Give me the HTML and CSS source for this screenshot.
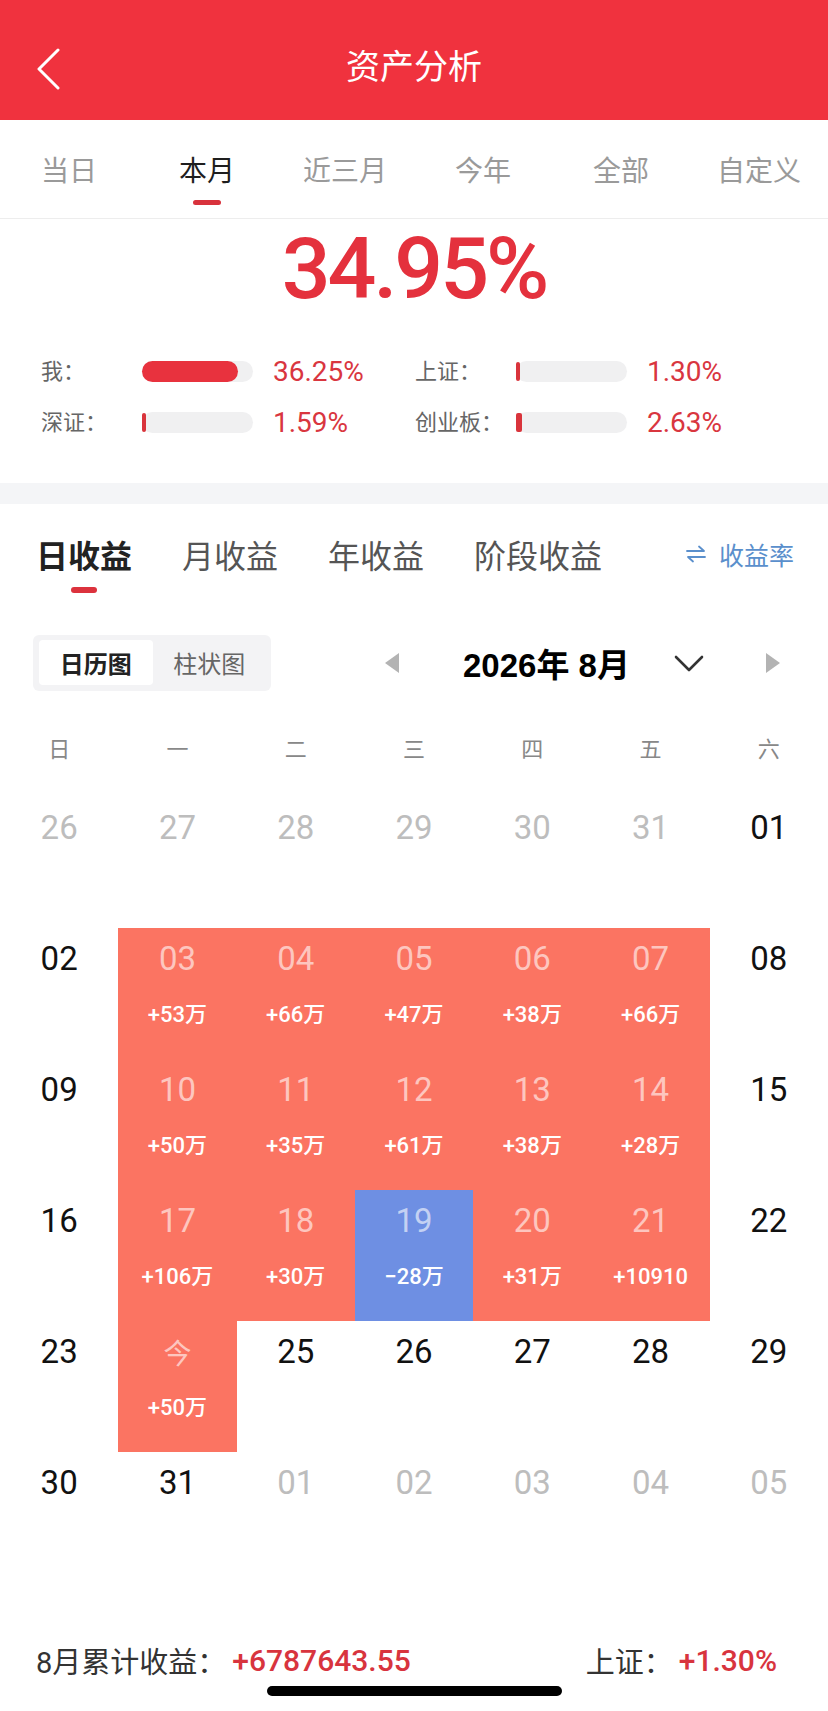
FILE: index.html
```html
<!DOCTYPE html>
<html lang="zh-CN">
<head>
<meta charset="utf-8">
<title>资产分析</title>
<link rel="stylesheet" href="styles.css">
</head>
<body>
<div class="page">
  <header class="topbar">
    <div class="back">
      <svg width="26" height="42" viewBox="0 0 26 42"><polyline points="22,2 3,21 22,40" fill="none" stroke="#fff" stroke-width="3" stroke-linecap="round" stroke-linejoin="round"/></svg>
    </div>
    <h1 class="title">资产分析</h1>
    <div></div>
  </header>

  <nav class="period-tabs">
    <div class="ptab"><span>当日</span><span class="pmark"></span></div>
    <div class="ptab active"><span>本月</span><span class="pmark"></span></div>
    <div class="ptab"><span>近三月</span><span class="pmark"></span></div>
    <div class="ptab"><span>今年</span><span class="pmark"></span></div>
    <div class="ptab"><span>全部</span><span class="pmark"></span></div>
    <div class="ptab"><span>自定义</span><span class="pmark"></span></div>
  </nav>

  <section class="summary">
    <div class="total">34.95%</div>
    <div class="compare">
      <div class="cmp"><span class="cmp-label">我：</span><span class="track"><span class="fill" style="width:96px"></span></span><span class="cmp-val">36.25%</span></div>
      <div class="cmp"><span class="cmp-label">上证：</span><span class="track"><span class="fill thin" style="width:4px"></span></span><span class="cmp-val">1.30%</span></div>
      <div class="cmp"><span class="cmp-label">深证：</span><span class="track"><span class="fill thin" style="width:4px"></span></span><span class="cmp-val">1.59%</span></div>
      <div class="cmp"><span class="cmp-label">创业板：</span><span class="track"><span class="fill thin" style="width:6px"></span></span><span class="cmp-val">2.63%</span></div>
    </div>
  </section>

  <div class="band"></div>

  <section class="income">
    <div class="itabs">
      <div class="itab active"><span>日收益</span><span class="imark"></span></div>
      <div class="itab"><span>月收益</span></div>
      <div class="itab"><span>年收益</span></div>
      <div class="itab"><span>阶段收益</span></div>
      <div class="rate">
        <svg width="22" height="20" viewBox="0 0 22 20"><path d="M2 7 H19 L14 2.5" fill="none" stroke="#5a8fcc" stroke-width="1.8" stroke-linecap="round" stroke-linejoin="round"/><path d="M20 13 H3 L8 17.5" fill="none" stroke="#5a8fcc" stroke-width="1.8" stroke-linecap="round" stroke-linejoin="round"/></svg>
        <span>收益率</span>
      </div>
    </div>

    <div class="toolbar">
      <div class="seg">
        <span class="seg-item on">日历图</span>
        <span class="seg-item">柱状图</span>
      </div>
      <div class="monthnav">
        <svg class="tri-l" width="14" height="20" viewBox="0 0 14 20"><polygon points="14,0 0,10 14,20" fill="#b3b3b3"/></svg>
        <span class="month">2026年 8月</span>
        <svg class="chev" width="30" height="17" viewBox="0 0 30 17"><polyline points="2,2 15,15 28,2" fill="none" stroke="#333" stroke-width="2.6" stroke-linecap="round" stroke-linejoin="round"/></svg>
        <svg class="tri-r" width="14" height="20" viewBox="0 0 14 20"><polygon points="0,0 14,10 0,20" fill="#b3b3b3"/></svg>
      </div>
    </div>

    <div class="weekdays">
      <span>日</span><span>一</span><span>二</span><span>三</span><span>四</span><span>五</span><span>六</span>
    </div>

    <div class="calendar">
      <div class="day muted"><span class="num">26</span></div>
      <div class="day muted"><span class="num">27</span></div>
      <div class="day muted"><span class="num">28</span></div>
      <div class="day muted"><span class="num">29</span></div>
      <div class="day muted"><span class="num">30</span></div>
      <div class="day muted"><span class="num">31</span></div>
      <div class="day"><span class="num">01</span></div>

      <div class="day"><span class="num">02</span></div>
      <div class="day up"><span class="num">03</span><span class="amt">+53万</span></div>
      <div class="day up"><span class="num">04</span><span class="amt">+66万</span></div>
      <div class="day up"><span class="num">05</span><span class="amt">+47万</span></div>
      <div class="day up"><span class="num">06</span><span class="amt">+38万</span></div>
      <div class="day up"><span class="num">07</span><span class="amt">+66万</span></div>
      <div class="day"><span class="num">08</span></div>

      <div class="day"><span class="num">09</span></div>
      <div class="day up"><span class="num">10</span><span class="amt">+50万</span></div>
      <div class="day up"><span class="num">11</span><span class="amt">+35万</span></div>
      <div class="day up"><span class="num">12</span><span class="amt">+61万</span></div>
      <div class="day up"><span class="num">13</span><span class="amt">+38万</span></div>
      <div class="day up"><span class="num">14</span><span class="amt">+28万</span></div>
      <div class="day"><span class="num">15</span></div>

      <div class="day"><span class="num">16</span></div>
      <div class="day up"><span class="num">17</span><span class="amt">+106万</span></div>
      <div class="day up"><span class="num">18</span><span class="amt">+30万</span></div>
      <div class="day down"><span class="num">19</span><span class="amt">−28万</span></div>
      <div class="day up"><span class="num">20</span><span class="amt">+31万</span></div>
      <div class="day up"><span class="num">21</span><span class="amt">+10910</span></div>
      <div class="day"><span class="num">22</span></div>

      <div class="day"><span class="num">23</span></div>
      <div class="day up"><span class="num cjk">今</span><span class="amt">+50万</span></div>
      <div class="day"><span class="num">25</span></div>
      <div class="day"><span class="num">26</span></div>
      <div class="day"><span class="num">27</span></div>
      <div class="day"><span class="num">28</span></div>
      <div class="day"><span class="num">29</span></div>

      <div class="day"><span class="num">30</span></div>
      <div class="day"><span class="num">31</span></div>
      <div class="day muted"><span class="num">01</span></div>
      <div class="day muted"><span class="num">02</span></div>
      <div class="day muted"><span class="num">03</span></div>
      <div class="day muted"><span class="num">04</span></div>
      <div class="day muted"><span class="num">05</span></div>
    </div>

    <div class="totals">
      <span class="tl-label">8月累计收益：</span>
      <span class="tl-val">+6787643.55</span>
      <span class="tl-label push">上证：</span>
      <span class="tl-val">+1.30%</span>
    </div>
  </section>

  <div class="home"></div>
</div>
</body>
</html>
```

FILE: styles.css
```css
html, body {
  margin: 0;
  padding: 0;
  background: #fff;
}

body {
  font-family: Roboto, "Noto Sans CJK SC", sans-serif;
  height: 1711px;
  overflow: hidden;
}

.page {
  width: 828px;
}

/* ---------- top bar ---------- */
.topbar {
  height: 120px;
  box-sizing: border-box;
  padding-top: 10px;
  background: #f0323e;
  display: grid;
  grid-template-columns: 120px 1fr 120px;
  align-items: center;
}

.back {
  padding-left: 36px;
  padding-top: 8px;
  display: flex;
}

.title {
  margin: 0;
  text-align: center;
  color: #fff;
  font-family: "Noto Sans CJK SC", sans-serif;
  font-size: 34px;
  font-weight: 400;
  line-height: 40px;
}

/* ---------- period tabs ---------- */
.period-tabs {
  display: flex;
  height: 99px;
  box-sizing: border-box;
  border-bottom: 1px solid #ededed;
}

.ptab {
  flex: 1;
  display: flex;
  flex-direction: column;
  align-items: center;
  padding-top: 32px;
  font-family: "Noto Sans CJK SC", sans-serif;
  font-size: 28px;
  line-height: 34px;
  color: #9a9a9a;
}

.pmark {
  width: 28px;
  height: 5px;
  margin-top: 14px;
  border-radius: 3px;
  background: transparent;
}

.ptab.active {
  color: #1e1e1e;
}

.ptab.active .pmark {
  background: #d8323c;
}

/* ---------- summary ---------- */
.total {
  text-align: center;
  font-size: 86px;
  line-height: 100px;
  font-weight: 500;
  letter-spacing: -3px;
  color: #e4313d;
}

.compare {
  display: grid;
  grid-template-columns: 374px 1fr;
  row-gap: 15px;
  padding: 34px 0 43px 41px;
}

.cmp {
  display: flex;
  align-items: center;
  height: 36px;
}

.cmp-label {
  width: 101px;
  font-family: "Noto Sans CJK SC", sans-serif;
  font-size: 22px;
  line-height: 30px;
  margin-top: -4px;
  color: #666;
}

.track {
  width: 111px;
  height: 21px;
  border-radius: 11px;
  background: #f0f0f1;
  display: flex;
}

.fill {
  height: 21px;
  border-radius: 11px;
  background: #e8323e;
}

.fill.thin {
  height: 19px;
  margin-top: 1px;
  border-radius: 2px;
  background: #d9343c;
}

.cmp-val {
  margin-left: 20px;
  font-size: 28px;
  color: #d9363f;
}

.band {
  height: 21px;
  background: #f4f5f7;
}

/* ---------- income tabs ---------- */
.itabs {
  display: flex;
  align-items: flex-start;
  gap: 50px;
  padding: 30px 34px 0 36px;
}

.itab {
  display: flex;
  flex-direction: column;
  align-items: center;
  font-family: "Noto Sans CJK SC", sans-serif;
  font-size: 32px;
  line-height: 40px;
  color: #555;
}

.itab.active {
  color: #222;
  font-weight: 700;
}

.imark {
  width: 26px;
  height: 6px;
  margin-top: 13px;
  border-radius: 3px;
  background: #dc323d;
}

.rate {
  margin-left: auto;
  display: flex;
  align-items: center;
  gap: 12px;
  font-family: "Noto Sans CJK SC", sans-serif;
  font-size: 25px;
  line-height: 40px;
  color: #5a8fcc;
}

/* ---------- toolbar ---------- */
.toolbar {
  display: flex;
  align-items: center;
  height: 56px;
  margin-top: 42px;
  padding-left: 33px;
}

.seg {
  width: 238px;
  height: 56px;
  box-sizing: border-box;
  padding: 5px 5px 6px 6px;
  border-radius: 6px;
  background: #f3f3f5;
  display: flex;
}

.seg-item {
  flex: 1;
  display: flex;
  align-items: center;
  justify-content: center;
  border-radius: 4px;
  font-family: "Noto Sans CJK SC", sans-serif;
  font-size: 24px;
  color: #666;
}

.seg-item.on {
  background: #fff;
  color: #222;
  font-weight: 700;
}

.monthnav {
  display: flex;
  align-items: center;
  margin-left: 114px;
}

.month {
  margin-left: 64px;
  font-family: "Liberation Sans", "Noto Sans CJK SC", sans-serif;
  font-weight: 700;
  font-size: 33px;
  color: #000;
}

.chev {
  margin-left: 44px;
}

.tri-r {
  margin-left: 62px;
}

/* ---------- calendar ---------- */
.weekdays {
  display: grid;
  grid-template-columns: repeat(7, 1fr);
  height: 52px;
  margin-top: 30px;
  align-items: center;
  text-align: center;
  font-family: "Noto Sans CJK SC", sans-serif;
  font-size: 22px;
  color: #888;
}

.calendar {
  display: grid;
  grid-template-columns: repeat(7, 1fr);
  grid-auto-rows: 131px;
  margin-top: 24px;
}

.day {
  display: flex;
  flex-direction: column;
  align-items: center;
  padding-top: 12px;
  box-sizing: border-box;
}

.num {
  font-size: 33px;
  line-height: 38px;
  color: #111;
}

.num.cjk {
  font-family: "Noto Sans CJK SC", sans-serif;
  font-size: 28px;
}

.day.muted .num {
  color: #bdbdbd;
}

.day.up {
  background: #fb7462;
}

.day.down {
  background: #6e8fe3;
}

.day.up .num,
.day.down .num {
  color: rgba(255, 255, 255, 0.6);
}

.amt {
  margin-top: 22px;
  font-size: 22px;
  line-height: 30px;
  font-weight: 500;
  color: #fff;
}

/* ---------- totals ---------- */
.totals {
  display: flex;
  align-items: center;
  height: 40px;
  margin-top: 57px;
  padding: 0 51px 0 36px;
}

.tl-label {
  font-family: Roboto, "Noto Sans CJK SC", sans-serif;
  font-size: 29px;
  color: #333;
}

.tl-label.push {
  margin-left: auto;
}

.tl-val {
  margin-left: 6px;
  font-size: 30px;
  font-weight: 500;
  color: #d8343e;
}

.home {
  width: 295px;
  height: 10px;
  margin: 6px auto 0;
  border-radius: 5px;
  background: #000;
}
```
